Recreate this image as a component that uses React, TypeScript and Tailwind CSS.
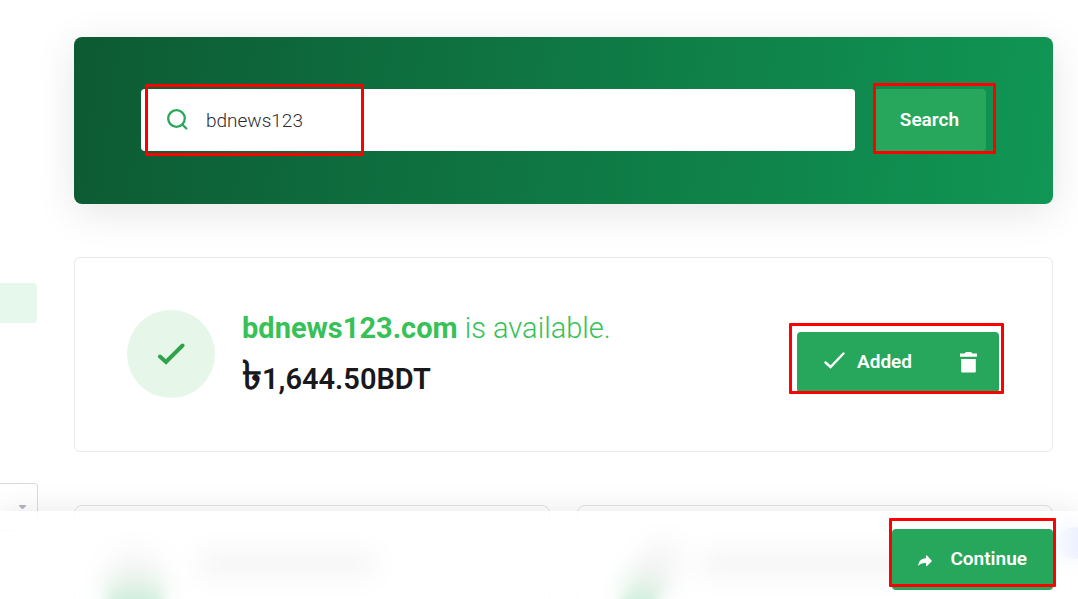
import { useState, type ReactNode } from 'react';

export default function App() {
  return (
    <div className="relative flex h-screen gap-9 overflow-hidden bg-white pr-[25px] font-['Roboto','Noto_Sans',sans-serif] text-[#18181d]">
      <Sidebar />
      <main className="flex min-w-0 flex-1 flex-col pt-[37px]">
        <DomainSearch />
        <SearchResult />
        <div className="mt-[53px] grid grid-cols-2 gap-[27px]">
          <ProductCard>
            <span className="mt-11 ml-8 h-24 w-14 rounded-t-full bg-linear-to-b from-[#d4d4d4] from-30% to-[#35b866] to-40% blur-[4px]" />
            <span className="mt-[50px] ml-9 h-4 w-44 rounded bg-[#bdbdbd]" />
          </ProductCard>
          <ProductCard>
            <span className="mt-8 ml-12 h-28 w-8 rotate-[30deg] rounded-full bg-linear-to-b from-[#c4c4c4] from-30% to-[#35b866] to-45% blur-[4px]" />
            <span className="mt-[50px] ml-11 h-4 w-52 rounded bg-[#bdbdbd]" />
          </ProductCard>
        </div>
      </main>
      <span className="absolute right-[-12px] bottom-10 size-8 rounded-full bg-[#a9b8ff]" />
      <CheckoutBar />
    </div>
  );
}

function Sidebar() {
  return (
    <aside className="w-[38px] shrink-0 pt-[283px]">
      <div className="mr-px h-10 rounded-r bg-[#e6f8ec]" />
      <div className="relative mt-40">
        <select aria-label="Currency" className="h-12 w-full appearance-none rounded-r border border-l-0 border-[#dcdcdf] bg-white">
          <option value="" />
        </select>
        <svg viewBox="0 0 7 4" className="pointer-events-none absolute top-[22px] right-3 h-1 w-[7px] fill-[#b3b6be]">
          <path d="M0 0h7v1L4 4H3L0 1z" />
        </svg>
      </div>
    </aside>
  );
}

function DomainSearch() {
  const [query, setQuery] = useState('bdnews123');

  return (
    <form
      onSubmit={(e) => e.preventDefault()}
      className="flex gap-[18px] rounded-lg bg-linear-[97deg,#0d5a33,#109655] px-[67px] pt-[52px] pb-[53px] shadow-[0_8px_40px_rgba(0,0,0,0.1)]"
    >
      <label className="relative flex h-[62px] min-w-0 flex-1 items-center gap-[19px] rounded bg-white px-[26px]">
        <svg viewBox="0 0 20 20" className="size-5 shrink-0 overflow-visible" fill="none" stroke="#27a75c" strokeWidth="2.300">
          <circle cx="9.5" cy="8.5" r="8.3" />
          <path d="M15.3 14.500l4 4" strokeLinecap="round" />
        </svg>
        <input
          aria-label="Domain name"
          value={query}
          onChange={(e) => setQuery(e.target.value)}
          className="min-w-0 flex-1 pt-0.5 text-[19px] font-light text-[#2c2c31] outline-none"
        />
        <Highlight className="-top-[5px] left-1 h-[72px] w-[219px]" />
      </label>
      <div className="relative">
        <button type="submit" className="h-[62px] rounded bg-[#27a75c] px-[27px] text-[19px] font-semibold text-white">
          Search
        </button>
        <Highlight className="-top-1.5 left-0 h-[71px] w-[123px]" />
      </div>
    </form>
  );
}

function SearchResult() {
  return (
    <section className="mt-[53px] flex items-center rounded-md border border-[#e9e9ea] pt-[52px] pr-[53px] pb-[53px] pl-[52px]">
      <div className="flex size-[88px] shrink-0 items-center justify-center rounded-full bg-[#e6f7ea]">
        <svg viewBox="0 0 28 22" className="h-[22px] w-7" fill="none" stroke="#2fa24b" strokeWidth="4" strokeLinecap="round">
          <path d="M3 13.500l6 5.500L25.500 2.500" />
        </svg>
      </div>
      <div className="-my-2 ml-[27px] flex-1 text-[29px] leading-[51px]">
        <h1 className="font-light text-[#37c157]">
          <strong className="font-bold">bdnews123.com</strong> is available.
        </h1>
        <p className="font-semibold">
          <span className="text-[40px] leading-0 font-semibold">৳</span>1,644.50BDT
        </p>
      </div>
      <div className="relative mt-4 flex rounded bg-[#27a75c] text-white">
        <button type="button" className="flex h-[61px] items-center gap-3 pl-[27px] text-[19px] font-semibold">
          <svg viewBox="0 0 21 17" className="-mt-1 h-[17px] w-[21px]" fill="none" stroke="currentColor" strokeWidth="2.400" strokeLinecap="round">
            <path d="M1.500 10.500l5 4.500L19.500 1.500" />
          </svg>
          Added
        </button>
        <button type="button" aria-label="Remove from cart" className="ml-[26px] px-[22px]">
          <svg viewBox="0 0 17 21" className="h-[21px] w-[17px] fill-current">
            <path d="M0 1.500h4.500L6 0h5l1.500 1.500H17v3.200H0zM1.200 7h14.600v12.500q0 1-1 1H2.200q-1 0-1-1z" />
          </svg>
        </button>
        <Highlight className="-top-[9px] -left-2 h-[71px] w-[215px]" />
      </div>
    </section>
  );
}

function ProductCard({ children }: { children: ReactNode }) {
  return <div className="flex h-44 items-start rounded-lg border border-[#e3e3e4]">{children}</div>;
}

function CheckoutBar() {
  return (
    <footer className="fixed inset-x-0 bottom-0 flex h-[88px] items-start justify-end bg-white/75 pt-[18px] pr-[25px] shadow-[0_0_30px_rgba(0,0,0,0.09)] backdrop-blur-[14px]">
      <div className="relative">
        <button type="button" className="flex h-[61px] items-center gap-[18px] rounded bg-[#27a75c] px-[26px] text-[19px] font-semibold text-white">
          <svg viewBox="0 0 14 12" className="mt-0.5 h-3 w-3.5 fill-current">
            <path d="M8 .7v2.600C3.500 3.500.500 6 .2 11c1.800-2 4-3.200 7.800-3v2.800q.3.800 1 .2l4.600-4.600q.4-.6 0-1L9 .4Q8.300 0 8 .7z" />
          </svg>
          Continue
        </button>
        <Highlight className="-top-[11px] -left-[3px] h-[69px] w-[167px]" />
      </div>
    </footer>
  );
}

/** Red frame laid over a control, used to point out a step. */
function Highlight({ className }: { className: string }) {
  return <span className={`pointer-events-none absolute rounded-[1px] border-[3px] border-[#fe0000] ${className}`} />;
}
